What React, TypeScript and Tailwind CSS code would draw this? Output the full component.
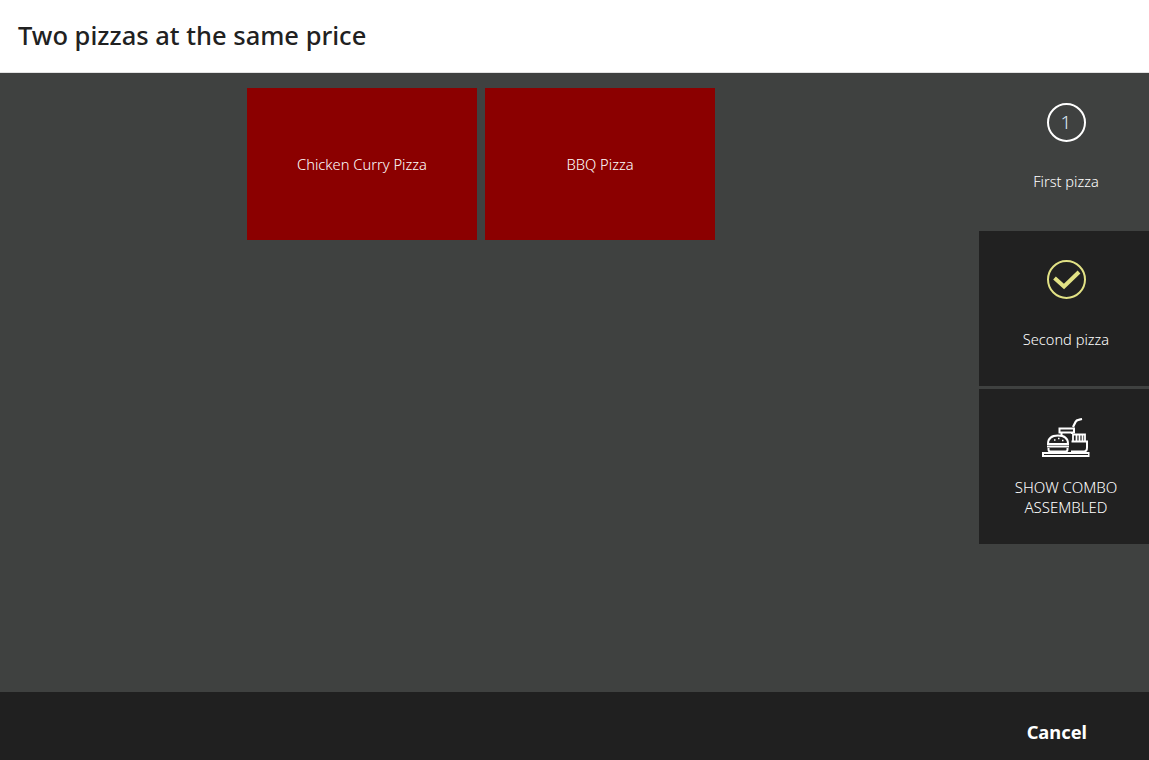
import React from "react";

const font = "[font-family:'Noto_Sans',sans-serif]";

const ComboIcon = () => (
  <svg width="48" height="39" viewBox="0 0 48 39" fill="none" stroke="#ffffff" strokeWidth="2">
    {/* straw */}
    <path d="M31 9 L33.5 4 Q34.5 2 36.5 1.8 L40 1" strokeWidth="2.2" />
    {/* cup */}
    <path d="M17.5 10.5 H32 V14.5 H17.5 Z" />
    <path d="M19.5 14.5 V18 M30 14.5 V16" />
    {/* burger */}
    <path d="M6 26 Q6 17.5 16 17.5 Q26 17.5 26 26 Z" />
    <path d="M5 28.5 H27" />
    <path d="M6.5 30 V31.5 Q6.5 33.5 8.5 33.5 H23.5 Q25.5 33.5 25.5 31.5 V30" />
    <path d="M12 22 h1.5 M16 20.5 h1.5 M20 22.5 h1.5" strokeWidth="1.4" />
    {/* fries */}
    <path d="M31 23 V16.5 H43 V23 M34.5 17 V23 M37.5 17 V23 M40.5 17 V23" strokeWidth="1.8" />
    <path d="M29.5 23.5 H45 V29.5 Q45 33.5 42 33.5 H29" />
    {/* tray */}
    <rect x="1" y="35" width="45.5" height="3" />
  </svg>
);

const Step = ({ label, icon, active, wide }: { label: React.ReactNode; icon: React.ReactNode; active?: boolean; wide?: boolean }) => (
  <div className={`h-[155px] flex flex-col items-center pl-1 ${active ? "bg-[#212121]" : ""}`}>
    <div className="h-[88px] flex items-start justify-center pt-[29px]">{icon}</div>
    <div
      className={`h-[40px] flex items-center leading-[20px] font-[350] text-white text-center ${wide ? "text-[15px]" : "text-[14.6px]"}`}
    >
      <span>{label}</span>
    </div>
  </div>
);

export default function App() {
  return (
    <div className={`h-[760px] flex flex-col overflow-hidden ${font}`}>
      <header className="h-[73px] shrink-0 bg-white border-b border-[#e2e2e2] flex items-center pl-[18px] pb-[2px]">
        <h1 className="text-[25.5px] font-medium text-[#212121]">Two pizzas at the same price</h1>
      </header>

      <div className="flex-1 flex bg-[#3f4140]">
        <main className="flex-1 flex items-start gap-2 pl-[247px] pt-[15px]">
          <button className="w-[230px] h-[152px] bg-[#8b0000] text-white text-[14.7px] font-[350]">Chicken Curry Pizza</button>
          <button className="w-[230px] h-[152px] bg-[#8b0000] text-white text-[14.7px] font-[350]">BBQ Pizza</button>
        </main>

        <aside className="w-[170px] flex flex-col gap-[3px]">
          <Step
            label="First pizza"
            icon={
              <div className="w-[39px] h-[39px] mt-[1px] rounded-full border-2 border-white flex items-center justify-center text-[#dcecf7] text-[19px] font-[350]">
                1
              </div>
            }
          />
          <Step
            active
            label="Second pizza"
            icon={
              <svg width="39" height="39" viewBox="0 0 39 39" fill="none" stroke="#e2e285">
                <circle cx="19.5" cy="19.5" r="18.5" strokeWidth="2" />
                <path d="M7.5 18 L17 26.5 L32 12" strokeWidth="4" />
              </svg>
            }
          />
          <Step
            active
            wide
            label={
              <>
                SHOW COMBO
                <br />
                ASSEMBLED
              </>
            }
            icon={<ComboIcon />}
          />
        </aside>
      </div>

      <footer className="h-[68px] shrink-0 bg-[#202020] flex items-center justify-end pr-[62px] pt-3">
        <button className="text-white text-[18.3px] font-bold">Cancel</button>
      </footer>
    </div>
  );
}
